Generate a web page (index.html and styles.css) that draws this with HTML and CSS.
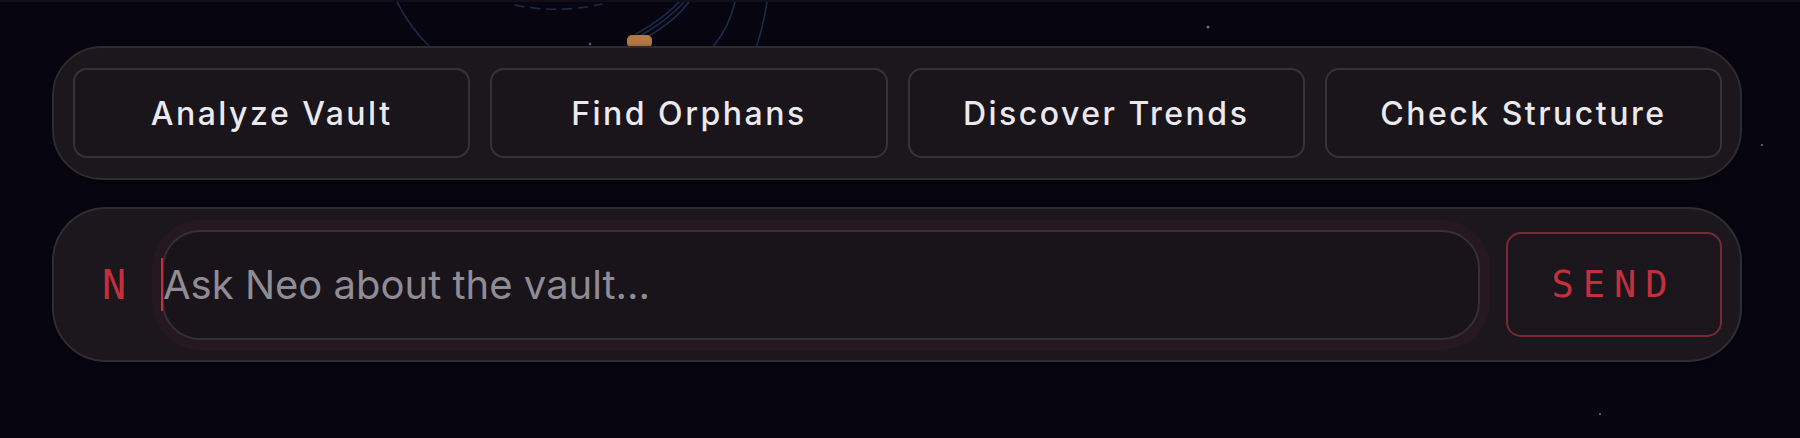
FILE: index.html
```html
<!DOCTYPE html>
<html lang="en">
<head>
<meta charset="utf-8">
<title>Neo vault chat</title>
<link rel="stylesheet" href="styles.css">
</head>
<body>
<svg class="backdrop" width="1800" height="438" viewBox="0 0 1800 438" aria-hidden="true">
  <g fill="none" stroke="#1d2b4a" stroke-width="1.6" stroke-linecap="round">
    <path d="M397 0 Q410 26 431 46"/>
    <path d="M515 3 Q558 12 602 2" stroke-dasharray="9 7"/>
    <path d="M684 0 Q668 18 640 34"/>
    <path d="M689 0 Q674 20 647 35"/>
    <path d="M679 0 Q663 17 636 32"/>
    <path d="M735 0 Q729 26 712 46"/>
    <path d="M767 0 Q763 26 756 46"/>
  </g>
  <rect x="627" y="33" width="25" height="13" rx="5" fill="#b47a43"/>
  <g fill="#6c6a7a">
    <circle cx="590" cy="42" r="1.2"/>
    <circle cx="1208" cy="25" r="1.5"/>
    <circle cx="1762" cy="143" r="1.1"/>
    <circle cx="1600" cy="412" r="1.1"/>
  </g>
</svg>

<main class="dock">
  <section class="quick-actions">
    <button class="action">Analyze Vault</button>
    <button class="action">Find Orphans</button>
    <button class="action">Discover Trends</button>
    <button class="action">Check Structure</button>
  </section>

  <section class="composer">
    <span class="avatar">N</span>
    <div class="prompt">
      <span class="caret"></span>
      <span class="placeholder">Ask Neo about the vault…</span>
    </div>
    <button class="send">SEND</button>
  </section>
</main>
</body>
</html>
```

FILE: styles.css
```css
* { box-sizing: border-box; }

html, body {
  margin: 0;
  padding: 0;
}

body {
  width: 1800px;
  height: 438px;
  overflow: hidden;
  background: #07050f;
  border-top: 2px solid #100e19;
  position: relative;
  font-family: "Inter", "Liberation Sans", sans-serif;
}

.backdrop {
  position: absolute;
  left: 0;
  top: 0;
  z-index: 0;
}

.dock {
  position: relative;
  z-index: 1;
  padding: 44px 58px 0 52px;
  display: flex;
  flex-direction: column;
  gap: 27px;
}

.quick-actions {
  height: 134px;
  border: 2px solid #2e2a31;
  border-radius: 50px;
  background: #1b171c;
  padding: 20px 18px 20px 19px;
  display: grid;
  grid-template-columns: repeat(4, 1fr);
  gap: 20px;
  box-shadow: 0 2px 6px rgba(0, 0, 0, 0.5);
}

.action {
  height: 90px;
  border: 2px solid #363238;
  border-radius: 14px;
  background: #19151a;
  color: #ebe9ee;
  font-family: "Inter", "Liberation Sans", sans-serif;
  font-size: 32px;
  font-weight: 500;
  letter-spacing: 2.5px;
  padding: 0;
}

.composer {
  height: 155px;
  border: 2px solid #302c33;
  border-radius: 54px;
  background: #1b171c;
  padding: 0 18px 0 48px;
  display: flex;
  align-items: center;
  box-shadow: 0 2px 6px rgba(0, 0, 0, 0.5);
}

.avatar {
  font-family: "DejaVu Sans Mono", "Liberation Mono", monospace;
  font-size: 40px;
  color: #c52f3d;
  width: 60px;
  flex: none;
  line-height: 1;
}

.prompt {
  flex: 1;
  height: 110px;
  border: 2px solid #343036;
  border-radius: 38px;
  background: #18141a;
  box-shadow: 0 0 0 10px #251821;
  display: flex;
  align-items: center;
  margin-right: 26px;
}

.caret {
  width: 2px;
  height: 53px;
  background: #c52f3d;
  margin-left: -3px;
  flex: none;
}

.placeholder {
  font-family: "Inter", "Liberation Sans", sans-serif;
  font-size: 40px;
  color: #8f8c96;
  line-height: 1;
}

.send {
  width: 216px;
  height: 105px;
  flex: none;
  border: 2px solid #7b2834;
  border-radius: 15px;
  background: #1a161b;
  color: #c52f3d;
  font-family: "DejaVu Sans Mono", "Liberation Mono", monospace;
  font-size: 37px;
  letter-spacing: 9px;
  padding: 0;
}
```
